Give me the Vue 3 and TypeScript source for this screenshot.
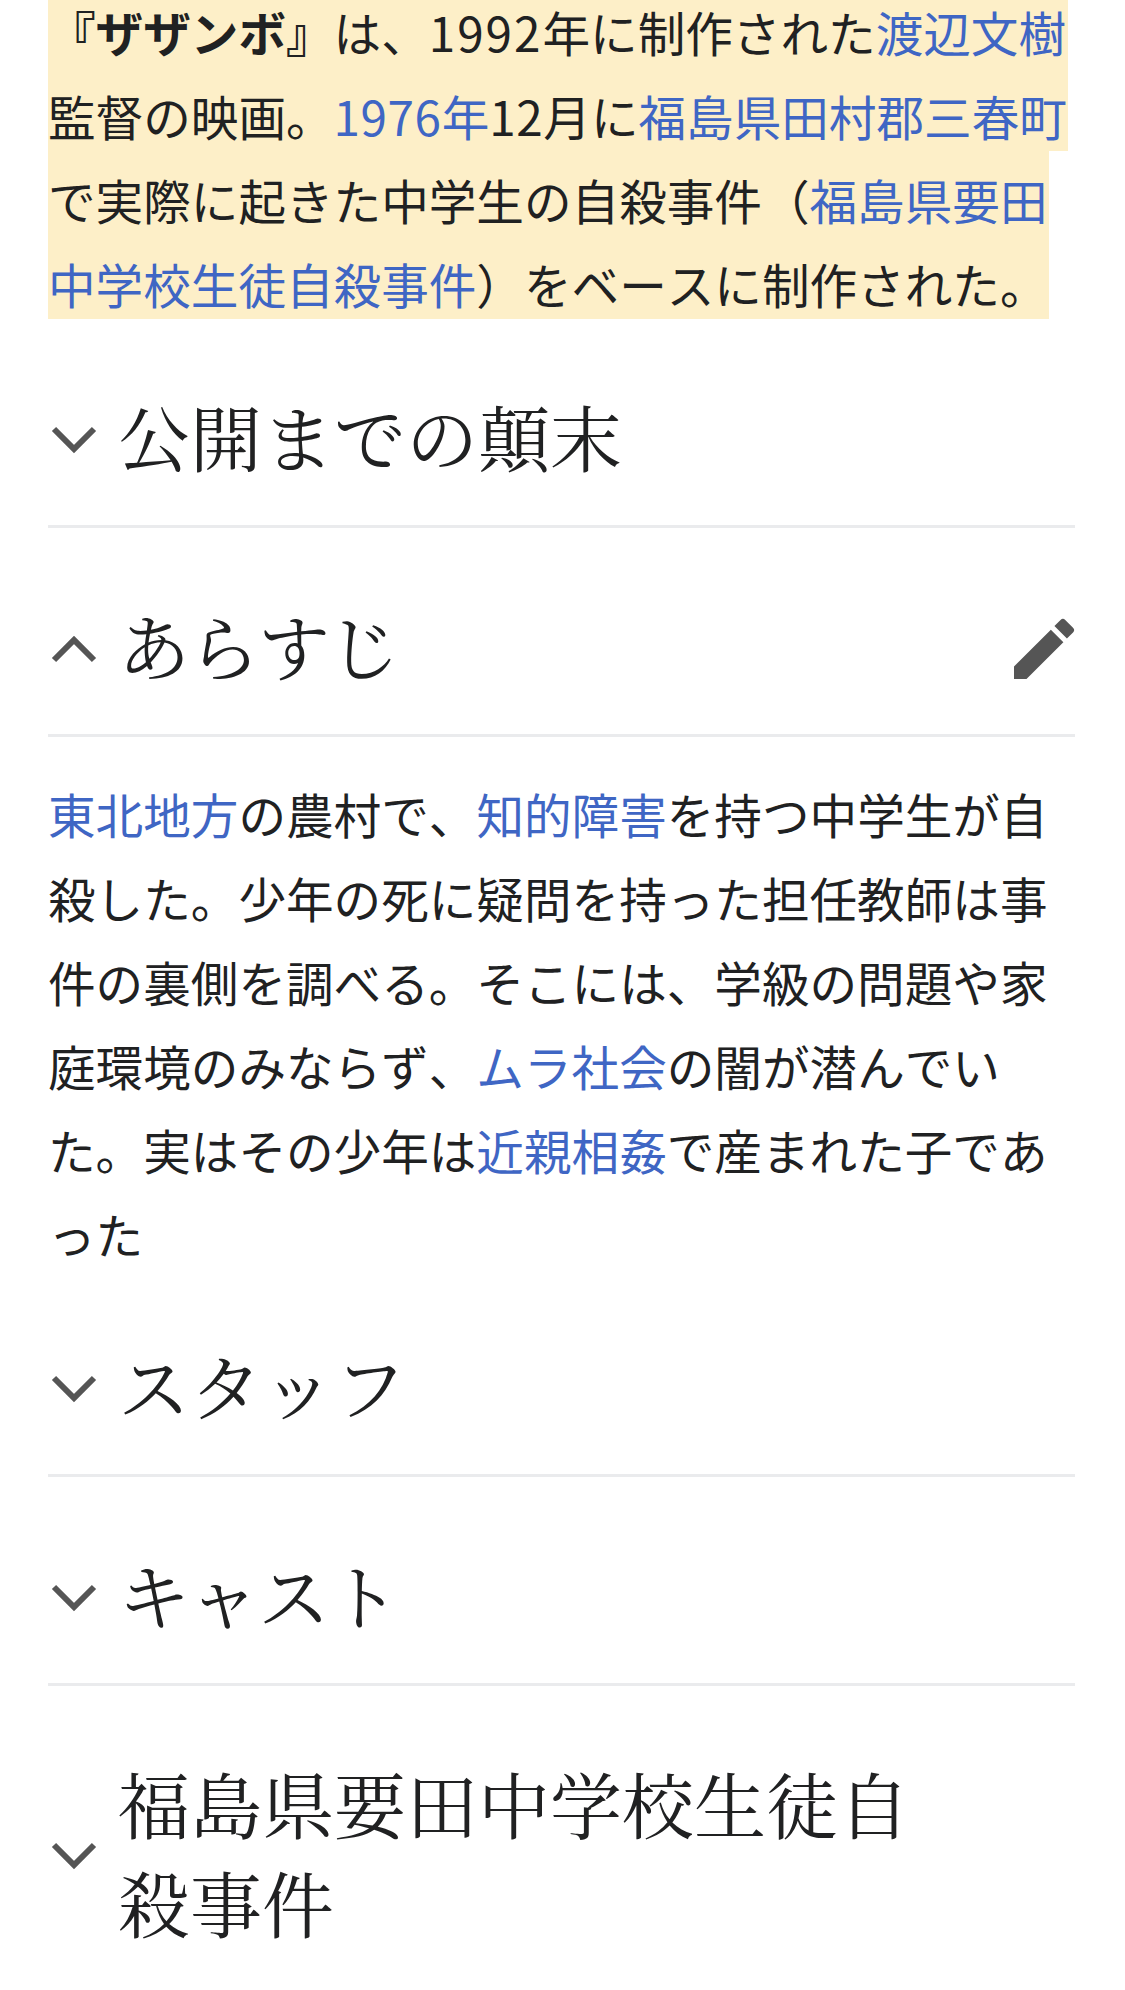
<template>
  <div class="page">
    <section class="lead">
      <div class="mark mark-wide">
        <p class="line"><b>『ザザンボ』</b>は、<span class="num-wide">1992</span>年に制作された<a>渡辺文樹</a></p>
        <p class="line">監督の映画。<a><span class="num">1976</span>年</a><span class="num">12</span>月に<a>福島県田村郡三春町</a></p>
      </div>
      <div class="mark mark-narrow">
        <p class="line">で実際に起きた中学生の自殺事件（<a>福島県要田</a></p>
        <p class="line"><a>中学校生徒自殺事件</a>）をベースに制作された。</p>
      </div>
    </section>

    <div class="heading">
      <svg class="chevron" viewBox="0 0 50 48"><path d="M6 13 L26 33 L46 13" /></svg>
      <h2>公開までの顛末</h2>
    </div>

    <div class="heading">
      <svg class="chevron" viewBox="0 0 50 48"><path d="M6 35 L26 15 L46 35" /></svg>
      <h2 class="tight">あらすじ</h2>
      <svg class="pencil" viewBox="0 0 24 24">
        <path d="M3 17.25V21h3.75L17.81 9.94l-3.75-3.75L3 17.25zM20.71 7.04a1 1 0 0 0 0-1.41l-2.34-2.34a1 1 0 0 0-1.41 0l-1.83 1.83 3.75 3.75 1.83-1.83z" />
      </svg>
    </div>

    <section class="body">
      <p v-for="(line, i) in synopsis" :key="i" class="line">
        <template v-for="(part, j) in line" :key="j">
          <a v-if="part.link">{{ part.text }}</a>
          <template v-else>{{ part.text }}</template>
        </template>
      </p>
    </section>

    <div v-for="item in closed" :key="item" class="heading">
      <svg class="chevron" viewBox="0 0 50 48"><path d="M6 13 L26 33 L46 13" /></svg>
      <h2 :class="{ tight: item === 'キャスト' }">{{ item }}</h2>
    </div>

    <div class="heading last">
      <svg class="chevron" viewBox="0 0 50 48"><path d="M6 13 L26 33 L46 13" /></svg>
      <h2>福島県要田中学校生徒自<br />殺事件</h2>
    </div>
  </div>
</template>

<script setup lang="ts">
interface Part {
  text: string
  link?: boolean
}

const synopsis: Part[][] = [
  [{ text: "東北地方", link: true }, { text: "の農村で、" }, { text: "知的障害", link: true }, { text: "を持つ中学生が自" }],
  [{ text: "殺した。少年の死に疑問を持った担任教師は事" }],
  [{ text: "件の裏側を調べる。そこには、学級の問題や家" }],
  [{ text: "庭環境のみならず、" }, { text: "ムラ社会", link: true }, { text: "の闇が潜んでい" }],
  [{ text: "た。実はその少年は" }, { text: "近親相姦", link: true }, { text: "で産まれた子であ" }],
  [{ text: "った" }]
]

const closed = ["スタッフ", "キャスト"]
</script>

<style scoped>
.page {
  width: 1125px;
  height: 1990px;
  overflow: hidden;
  box-sizing: border-box;
  padding: 0 48px;
  background: #fff;
  color: #202122;
  font-family: "Noto Sans CJK JP", "Liberation Sans", sans-serif;
  font-size: 47.6px;
  font-kerning: none;
}

.line {
  margin: 0;
  line-height: 84px;
  height: 84px;
  white-space: nowrap;
}

a {
  color: #3f66c4;
}

b {
  font-weight: 700;
}

.num {
  letter-spacing: 0.6px;
}

.num-wide {
  letter-spacing: 2px;
}

.lead {
  width: 1029px;
  margin-top: -17px;
}

.mark {
  background: #fdefc8;
}

/* text sits a little below the middle of each highlighted row */
.mark .line {
  line-height: 98px;
}

.mark-wide {
  width: 1020px;
}

.mark-narrow {
  width: 1001px;
}

.heading {
  display: flex;
  align-items: center;
  width: 1027px;
  box-sizing: border-box;
  padding: 67px 0 32px;
  border-bottom: 3px solid #eaebed;
}

.heading h2 {
  margin: 0;
  padding-bottom: 8px;
  font-family: "Noto Serif CJK JP", "Noto Sans CJK JP", serif;
  font-size: 72px;
  line-height: 99px;
  font-weight: 400;
  color: #202122;
}

.heading h2.tight {
  letter-spacing: -2px;
}

.chevron {
  flex: none;
  width: 50px;
  height: 48px;
  margin-right: 20px;
}

.chevron path {
  fill: none;
  stroke: #555;
  stroke-width: 6;
}

.pencil {
  flex: none;
  width: 80px;
  height: 80px;
  margin-left: auto;
  margin-right: -9px;
  fill: #555;
}

.body {
  padding-top: 35px;
  margin-bottom: -8px;
}

.last {
  border-bottom: none;
}
</style>
